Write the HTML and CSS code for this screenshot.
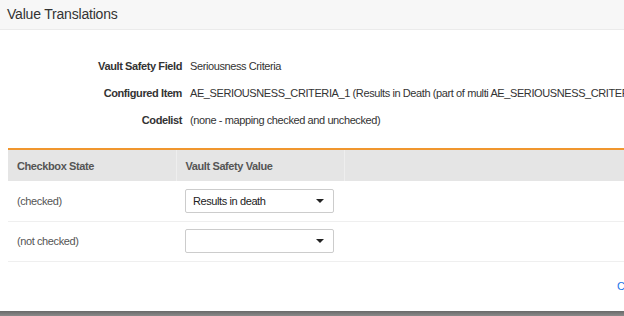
FILE: index.html
```html
<!DOCTYPE html>
<html lang="en">
<head>
  <meta charset="UTF-8" />
  <title>Value Translations</title>
  <link rel="stylesheet" href="styles.css">
</head>
<body>
  <div class="dialog">
    <header class="dialog-header">Value Translations</header>

    <div class="fields">
      <div class="field-label">Vault Safety Field</div>
      <div class="field-value">Seriousness Criteria</div>
      <div class="field-label">Configured Item</div>
      <div class="field-value">AE_SERIOUSNESS_CRITERIA_1 (Results in Death (part of multi AE_SERIOUSNESS_CRITERIA))</div>
      <div class="field-label">Codelist</div>
      <div class="field-value">(none - mapping checked and unchecked)</div>
    </div>

    <table class="map-table">
      <thead>
        <tr>
          <th class="col-state">Checkbox State</th>
          <th class="col-value">Vault Safety Value</th>
          <th class="col-rest"></th>
        </tr>
      </thead>
      <tbody>
        <tr>
          <td>(checked)</td>
          <td>
            <div class="select">
              <span class="select-text">Results in death</span>
              <span class="caret"></span>
            </div>
          </td>
          <td></td>
        </tr>
        <tr>
          <td>(not checked)</td>
          <td>
            <div class="select">
              <span class="select-text"></span>
              <span class="caret"></span>
            </div>
          </td>
          <td></td>
        </tr>
      </tbody>
    </table>

    <footer class="dialog-footer">
      <a class="btn-link" href="#">Cancel</a>
    </footer>
  </div>
  <div class="backdrop-edge"></div>
</body>
</html>
```

FILE: styles.css
```css
* {
  box-sizing: border-box;
}

html, body {
  margin: 0;
  height: 316px;
  overflow: hidden;
}

body {
  font-family: "Liberation Sans", Arial, sans-serif;
  font-size: 11px;
  letter-spacing: -0.4px;
  color: #333;
  background: #fff;
  display: flex;
  flex-direction: column;
}

.dialog {
  width: 760px;
  height: 311px;
  background: #fff;
  display: flex;
  flex-direction: column;
}

.dialog-header {
  height: 30px;
  padding: 0 7px;
  line-height: 29px;
  font-size: 14px;
  letter-spacing: -0.2px;
  color: #333;
  background: #f7f7f7;
  border-bottom: 1px solid #ebebeb;
}

.fields {
  display: grid;
  grid-template-columns: 182px 1fr;
  column-gap: 8px;
  grid-auto-rows: 27px;
  align-items: center;
  margin-top: 22px;
  white-space: nowrap;
}

.field-label {
  text-align: right;
  font-weight: bold;
  color: #333;
}

.field-value {
  color: #333;
}

.map-table {
  margin: 15px 0 0 8px;
  border-collapse: collapse;
  border-top: 2px solid #f0962e;
  width: 752px;
}

.map-table th {
  height: 32px;
  padding: 0 9px;
  background: #e5e5e5;
  color: #555;
  font-weight: bold;
  text-align: left;
}

.map-table th + th {
  border-left: 1px solid #eeeeee;
}

.col-state,
.col-value {
  width: 168px;
}

.map-table td {
  height: 40px;
  padding: 0 9px;
  color: #555;
  border-bottom: 1px solid #efefef;
}

.select {
  width: 149px;
  height: 24px;
  border: 1px solid #cccccc;
  border-radius: 2px;
  display: flex;
  align-items: center;
  justify-content: space-between;
  padding: 0 9px 0 7px;
  background: #fff;
}

.select-text {
  color: #222;
}

.caret {
  width: 0;
  height: 0;
  border-left: 4px solid transparent;
  border-right: 4px solid transparent;
  border-top: 4px solid #222;
}

.dialog-footer {
  flex: 1;
  display: flex;
  align-items: center;
  padding-left: 617px;
}

.btn-link {
  color: #1a73e8;
  text-decoration: none;
  font-size: 11px;
}

.backdrop-edge {
  height: 5px;
  background: linear-gradient(#6a6a6a, #8a8a8a);
}
```
